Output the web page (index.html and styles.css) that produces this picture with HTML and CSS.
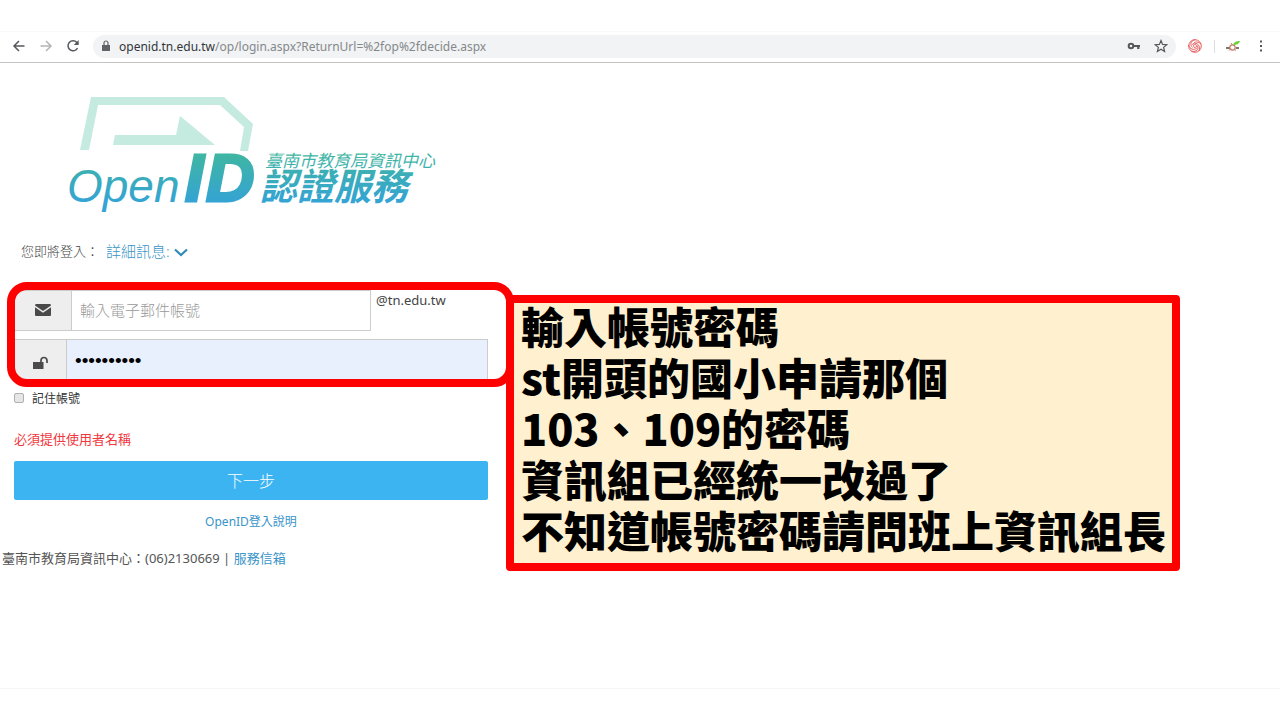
FILE: index.html
```
<!DOCTYPE html>
<html lang="zh-Hant">

<head>
    <meta charset="utf-8">
    <meta name="viewport" content="width=device-width, initial-scale=1.0">
    <title>OpenID 認證服務</title>
    <link rel="stylesheet" href="styles.css">
</head>

<body>
    <div class="browser">
        <header class="toolbar">
            <button type="button" class="tool" aria-label="Back">
                <svg width="14" height="14" viewBox="0 0 14 14"><path d="M12.5 7H2M7 2L2 7l5 5" /></svg>
            </button>
            <button type="button" class="tool dim" aria-label="Forward">
                <svg width="14" height="14" viewBox="0 0 14 14"><path d="M1.5 7H12M7 2l5 5-5 5" /></svg>
            </button>
            <button type="button" class="tool" aria-label="Reload">
                <svg width="14" height="14" viewBox="0 0 14 14"><path d="M11.5 9A5 5 0 1 1 10.8 3.5L12 5" /><path class="solid" d="M12.6 1v5H7.8z" /></svg>
            </button>
            <div class="address">
                <svg class="lock" width="10" height="12" viewBox="0 0 10 12"><path d="M1 5h8v6H1z" fill="#5f6368" /><path d="M3 5V3a2 2 0 0 1 4 0v2" fill="none" stroke="#5f6368" stroke-width="1.2" /></svg>
                <p class="url"><span>openid.tn.edu.tw</span>/op/login.aspx?ReturnUrl=%2fop%2fdecide.aspx</p>
                <button type="button" class="tool" aria-label="Passwords">
                    <svg width="14" height="14" viewBox="0 0 14 14"><circle cx="4" cy="7" r="2.3" stroke-width="2" /><path d="M6.5 7H13M11.3 7v3" stroke-width="2.2" /></svg>
                </button>
                <button type="button" class="tool" aria-label="Bookmark">
                    <svg width="14" height="14" viewBox="0 0 14 14"><path d="M7 1.5l1.6 3.9 4.2.3-3.2 2.7 1 4.1L7 10.3l-3.6 2.2 1-4.1L1.2 5.7l4.2-.3z" stroke-width="1.2" /></svg>
                </button>
            </div>
            <button type="button" class="tool swirl" aria-label="Extension">
                <svg width="14" height="14" viewBox="0 0 14 14">
                    <circle cx="7" cy="7" r="6.3" />
                    <path d="M7 .7C2 2 2 6 4.5 8.5M13 5C9 1.5 5.5 3 4.6 6M11 12c1.5-5-1-8-4.5-7.5M3.5 12.2c5 1 7.5-2 6-5.5M.8 6c1 4.5 5 5.5 8 3M7 5.2L8.8 7 7 8.8 5.2 7z" />
                </svg>
            </button>
            <span class="divider"></span>
            <button type="button" class="tool" aria-label="Profile">
                <svg width="16" height="12" viewBox="0 0 16 12">
                    <path d="M1 8h4M11 8h3" stroke="#777" stroke-width="2" />
                    <circle cx="7.5" cy="7.5" r="2.7" stroke="#c77b62" stroke-width="1.2" />
                    <path d="M4 10.5l2-2M9 9l2 1.5M7 4.5L6 3" stroke="#c77b62" stroke-width="1" />
                    <path d="M8 5c1-3 3-4 7-4-1 3-3 4-7 4z" fill="#6ed13c" stroke="none" />
                </svg>
            </button>
            <button type="button" class="tool" aria-label="Menu">
                <svg width="14" height="14" viewBox="0 0 14 14"><path class="solid" d="M6 1.5h2v2H6zM6 6h2v2H6zM6 10.5h2v2H6z" /></svg>
            </button>
        </header>

        <main>
            <section class="login">
                <svg class="logo" width="400" height="130" viewBox="50 90 400 130" role="img" aria-label="OpenID 認證服務">
                    <defs>
                        <linearGradient id="teal" gradientUnits="userSpaceOnUse" x1="0" y1="155" x2="0" y2="204">
                            <stop offset="0" stop-color="#3fb5a3" />
                            <stop offset="1" stop-color="#34a3d6" />
                        </linearGradient>
                    </defs>
                    <path fill="#c5eadf" d="M80 150L91 97H224L253 124L248 151H240L244 127L220 105H98L89 150zM115 135H176L180 116L215 145H113z" />
                    <g fill="url(#teal)">
                        <text class="logo-open" x="67" y="202">Open</text>
                        <text class="logo-id" x="185" y="201">I</text>
                        <text class="logo-id" x="206" y="201">D</text>
                        <text class="logo-center" x="265" y="167">臺南市教育局資訊中心</text>
                        <text class="logo-service" x="260" y="200">認證服務</text>
                    </g>
                </svg>

                <p class="target">您即將登入：
                    <a href="#">詳細訊息:
                        <svg width="14" height="9" viewBox="0 0 14 9"><path d="M1 1.5l6 5.5 6-5.5" fill="none" stroke="#2d8bb8" stroke-width="2.2" /></svg>
                    </a>
                </p>

                <form>
                    <div class="fields">
                        <div class="field">
                            <label class="addon" for="mail">
                                <svg width="16" height="12" viewBox="0 0 16 12" fill="#4a4a4a"><path d="M1 0h14q1 0 1 1.5L8 7 0 1.5Q0 0 1 0z" /><path d="M0 3.2L8 8.7l8-5.5V11q0 1-1 1H1q-1 0-1-1z" /></svg>
                            </label>
                            <input id="mail" type="text" placeholder="輸入電子郵件帳號">
                            <span class="domain">@tn.edu.tw</span>
                        </div>
                        <div class="field">
                            <label class="addon" for="password">
                                <svg width="16" height="14" viewBox="0 0 16 14"><path d="M0 6h10.500v7H0z" fill="#4a4a4a" /><path d="M8 7V4.500a3 3 0 0 1 6 0V7" fill="none" stroke="#4a4a4a" stroke-width="1.7" /></svg>
                            </label>
                            <input id="password" type="password" value="0123456789">
                        </div>
                    </div>
                    <label class="remember"><input type="checkbox">記住帳號</label>
                    <p class="error">必須提供使用者名稱</p>
                    <button type="button" class="next">下一步</button>
                    <a href="#" class="help">OpenID登入說明</a>
                </form>

                <footer>臺南市教育局資訊中心：(06)2130669 | <a href="#">服務信箱</a></footer>
            </section>

            <aside class="note">
                <p>輸入帳號密碼</p>
                <p>st開頭的國小申請那個</p>
                <p>103、109的密碼</p>
                <p>資訊組已經統一改過了</p>
                <p>不知道帳號密碼請問班上資訊組長</p>
            </aside>
        </main>
    </div>
</body>

</html>
```

FILE: styles.css
```
* {
    box-sizing: border-box;
    margin: 0;
}

body {
    padding: 31px 0;
    background-color: white;
    color: #444;
    font-family: "Noto Sans", "Noto Sans CJK TC", sans-serif;
    font-size: 13px;
    font-weight: 300;
}

a {
    color: #3a94c8;
    text-decoration: none;
}

button,
input {
    font-family: inherit;
    font-weight: inherit;
}

.browser {
    min-height: calc(100vh - 62px);
    border-top: 1px solid #f8f8f8;
    border-bottom: 1px solid #f6f6f6;
}

/* browser bar */
.toolbar {
    display: flex;
    align-items: center;
    height: 31px;
    padding: 0 12px 2px;
    border-bottom: 1px solid #c4c4c4;
}

.tool {
    display: flex;
    flex: none;
    margin-right: 13px;
    padding: 0;
    border: none;
    background: none;
}

.tool svg {
    fill: none;
    stroke: #55585c;
    stroke-width: 1.5;
}

.tool .solid {
    fill: #55585c;
    stroke: none;
}

.dim svg {
    stroke: #b5b5b5;
}

.swirl {
    margin-right: 12px;
}

.swirl svg {
    stroke: #e85a5a;
    stroke-width: 1;
}

.toolbar > .tool:last-child {
    margin-right: 0;
}

.address {
    display: flex;
    flex: 1;
    align-items: center;
    height: 23px;
    margin-right: 12px;
    padding-left: 8px;
    border-radius: 12px;
    background-color: #f1f3f4;
}

.address .tool:last-child {
    margin-right: 8px;
}

.url {
    flex: 1;
    margin-left: 8px;
    color: #85888b;
    font-size: 12px;
    font-weight: 400;
}

.url span {
    color: #33363a;
}

.divider {
    width: 1px;
    height: 13px;
    margin-right: 10px;
    background-color: #ddd;
}

/* page */
main {
    display: flex;
    align-items: flex-start;
}

.login {
    flex: none;
    width: 506px;
}

.logo {
    display: block;
    margin: 27px 0 0 50px;
}

.logo-open {
    font: italic 400 46px "Liberation Sans", sans-serif;
}

.logo-id {
    font: italic 700 67px "Liberation Sans", sans-serif;
    stroke: url(#teal);
    stroke-width: 3px;
}

.logo-center {
    font: italic 400 17px "Noto Sans CJK TC", sans-serif;
}

.logo-service {
    font: italic 700 37px "Noto Sans CJK TC", sans-serif;
}

.target {
    display: flex;
    align-items: center;
    height: 24px;
    margin: 18px 0 0 21px;
}

.target a {
    margin-left: 7px;
    font-size: 15px;
}

form {
    width: 474px;
    margin: 28px 0 0 14px;
}

.fields {
    position: relative;
}

/* red frame drawn over both fields */
.fields::after {
    content: "";
    position: absolute;
    inset: -8px -26px -7px -7px;
    border: 8px solid red;
    border-radius: 20px;
    pointer-events: none;
}

.field {
    display: flex;
    height: 41px;
}

.field + .field {
    margin-top: 8px;
}

.addon {
    display: flex;
    flex: none;
    align-items: center;
    justify-content: center;
    width: 57px;
    padding-bottom: 2px;
    border: 1px solid #ccc;
    border-right: none;
    background-color: #eee;
}

.field + .field .addon {
    width: 52px;
    padding: 6px 0 0;
}

.field input {
    width: 300px;
    padding: 0 8px 2px;
    border: 1px solid #ccc;
    border-radius: 0;
    font-size: 15px;
}

.field input::placeholder {
    color: #999;
}

.field input[type="password"] {
    flex: 1;
    padding: 3px 8px 0;
    background-color: #e8f0fe;
    color: black;
    font-family: "Liberation Sans", sans-serif;
    font-size: 19px;
}

.domain {
    margin-left: 5px;
    font-weight: 400;
    line-height: 21px;
}

.remember {
    display: flex;
    align-items: center;
    height: 18px;
    margin-top: 9px;
    color: #333;
    font-size: 12px;
    font-weight: 400;
}

.remember input {
    appearance: none;
    width: 10px;
    height: 10px;
    margin: 0 8px 0 0;
    border: 1px solid #b0b0b0;
    border-radius: 2px;
    background-color: #e6e6e6;
}

.remember input:checked {
    background-color: #3cb4f2;
}

.error {
    margin-top: 22px;
    color: #f0383e;
    font-weight: 400;
    line-height: 20px;
}

.next {
    display: block;
    width: 100%;
    height: 39px;
    margin-top: 12px;
    padding-bottom: 3px;
    border: none;
    border-radius: 2px;
    background-color: #3cb4f2;
    color: white;
    font-size: 16px;
}

.help {
    display: block;
    margin-top: 12px;
    font-size: 12px;
    font-weight: 400;
    line-height: 20px;
    text-align: center;
}

footer {
    margin: 16px 0 0 2px;
    color: #555;
    font-weight: 400;
    line-height: 20px;
}

.note {
    flex: 1;
    margin: 232px 100px 0 0;
    padding: 1px 0 12px 7px;
    border: 8px solid red;
    border-radius: 4px;
    background-color: #fff0cf;
    color: black;
    font: 900 43px/43px "Noto Sans CJK TC", sans-serif;
    white-space: nowrap;
}

.note p + p {
    margin-top: 8px;
}
```
